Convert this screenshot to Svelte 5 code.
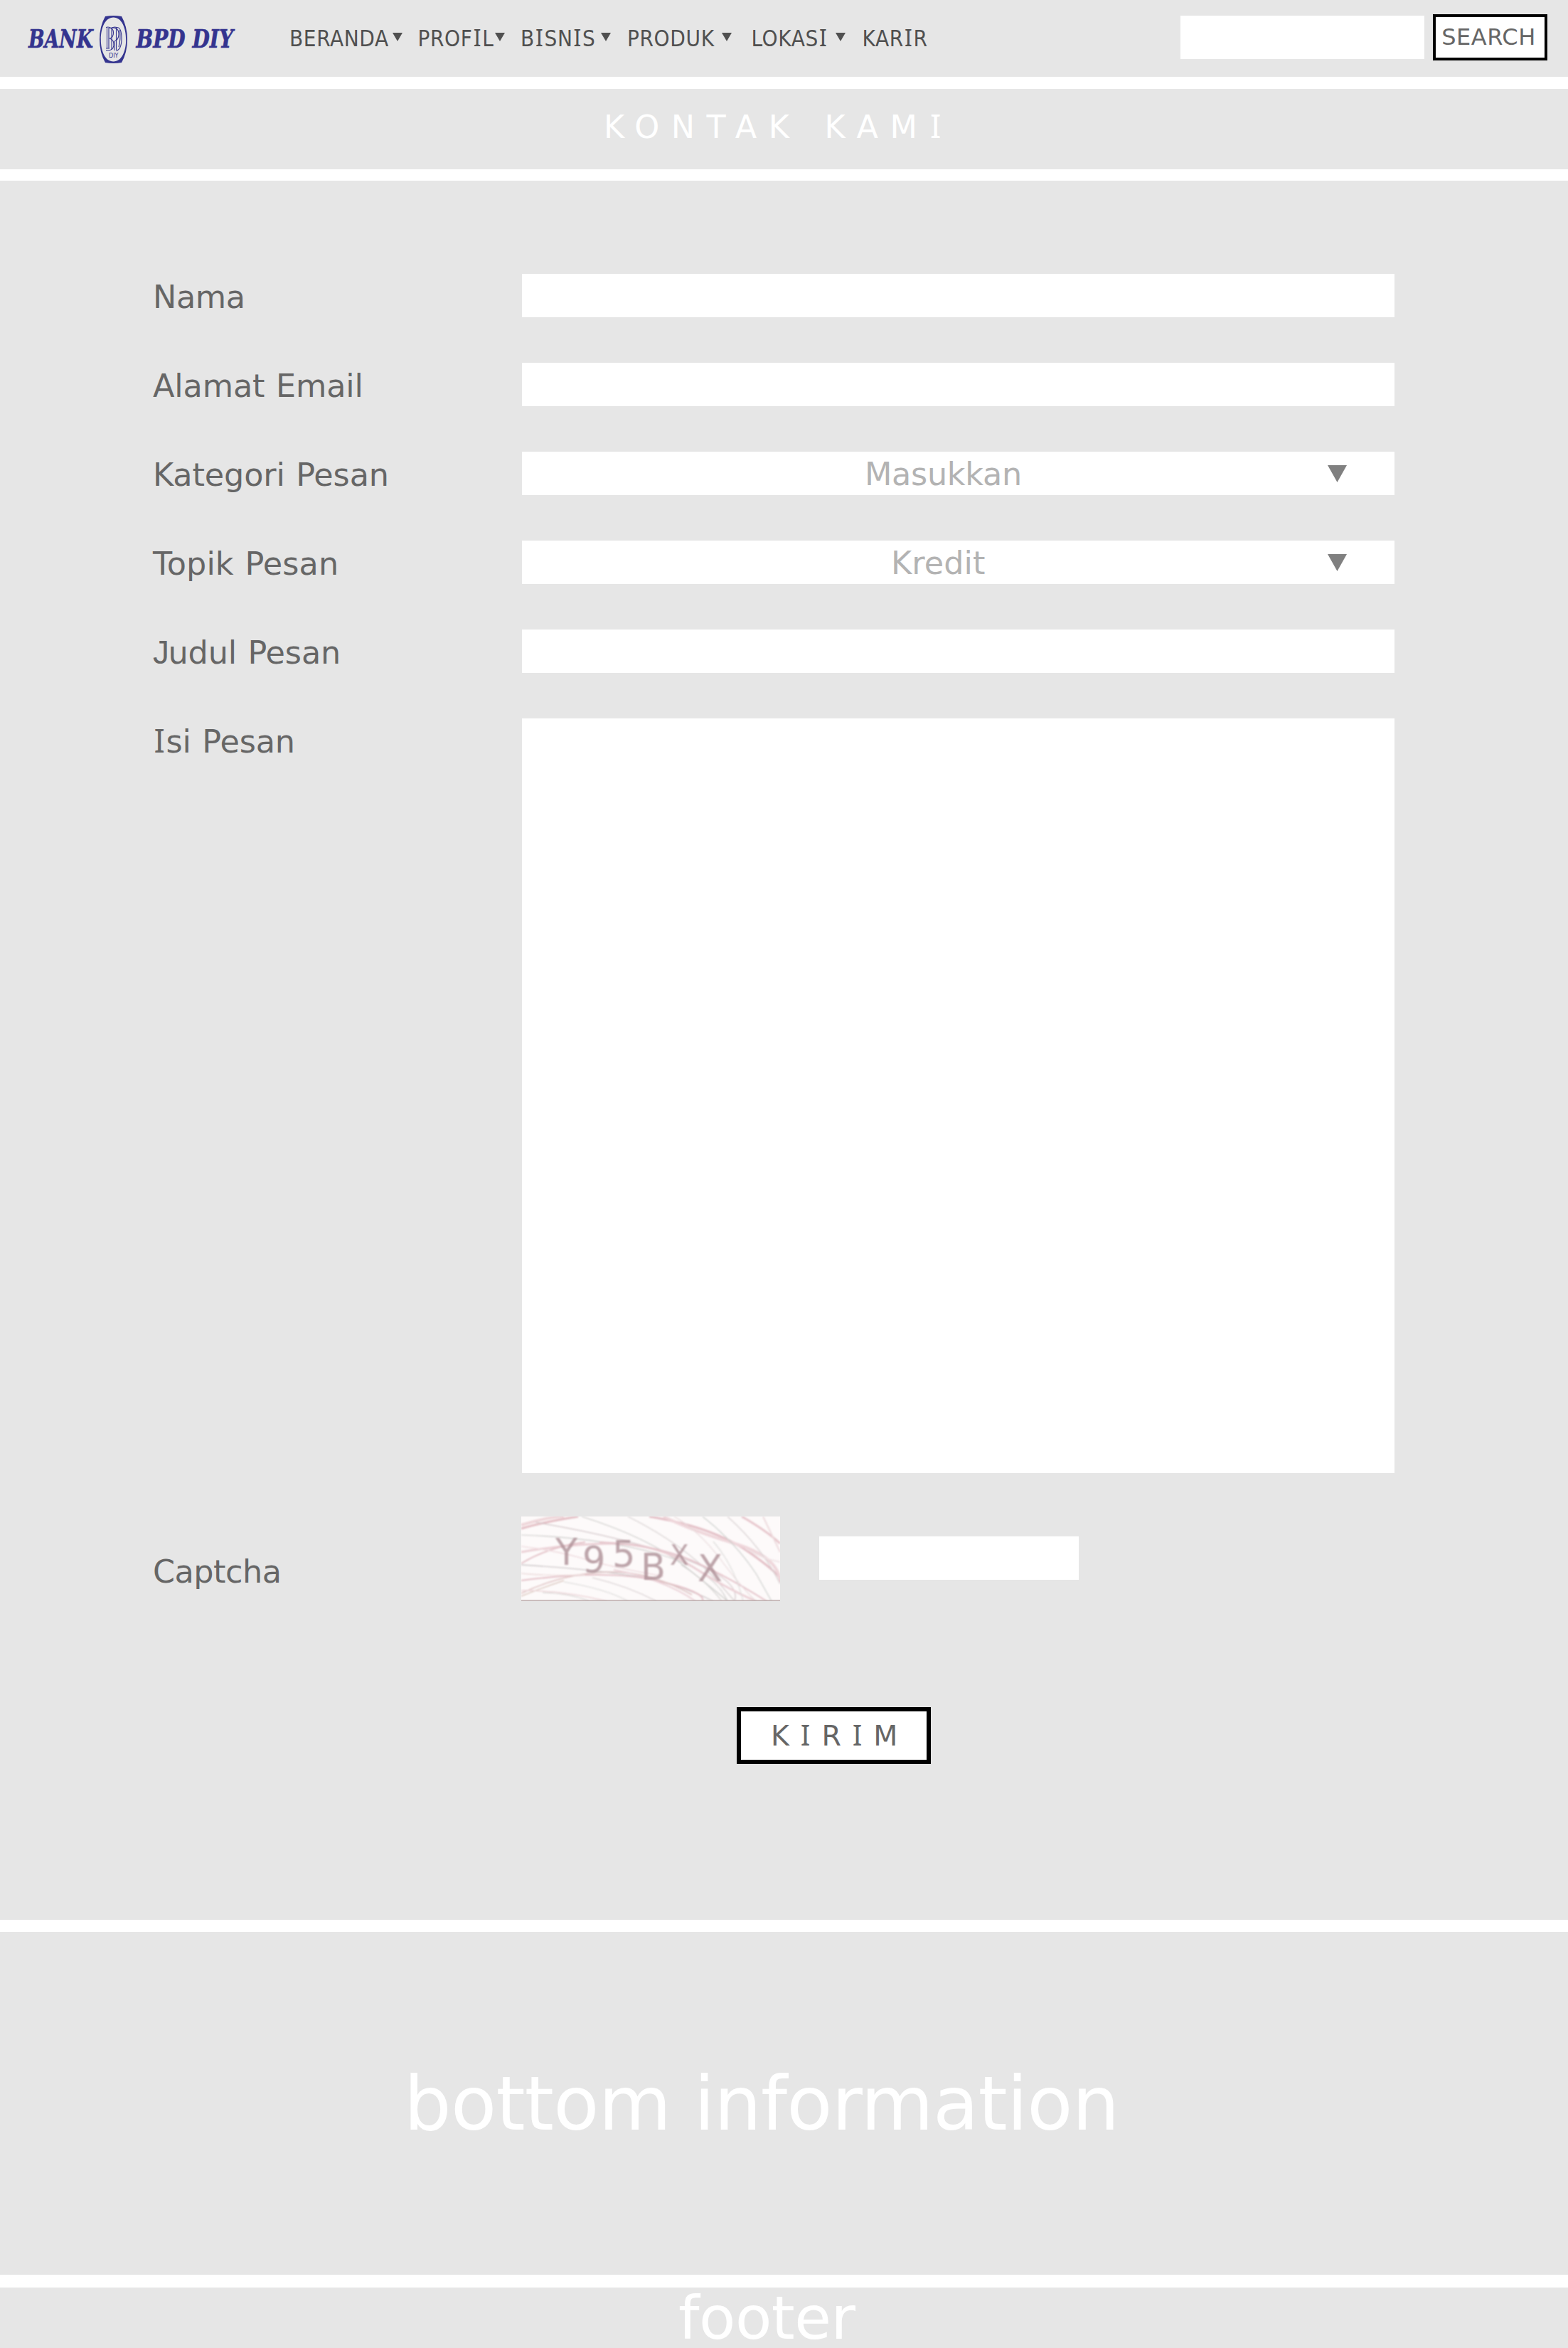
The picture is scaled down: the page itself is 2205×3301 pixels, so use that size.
<script>
  const menu = [
    { name: 'BERANDA', key: 'beranda', arrow: true },
    { name: 'PROFIL', key: 'profil', arrow: true },
    { name: 'BISNIS', key: 'bisnis', arrow: true },
    { name: 'PRODUK', key: 'produk', arrow: true },
    { name: 'LOKASI', key: 'lokasi', arrow: true },
    { name: 'KARIR', key: 'karir', arrow: false }
  ];

  const fields = [
    { label: 'Nama', key: 'nama' },
    { label: 'Alamat Email', key: 'email' },
    { label: 'Kategori Pesan', key: 'kategori', value: 'Masukkan' },
    { label: 'Topik Pesan', key: 'topik', value: 'Kredit' },
    { label: 'Judul Pesan', key: 'judul' },
    { label: 'Isi Pesan', key: 'isi', tall: true }
  ];

  // Security-image strokes: [path, colour, width]
  const strokes = [
    ['M0 17 Q30 8 80 0', '#dfb4bb', 3], ['M0 12 Q40 0 60 0', '#ecd0d4', 4],
    ['M20 8 Q150 30 230 60 T300 119', '#c9bcbf', 1.2], ['M0 26 Q110 30 190 52 T290 119', '#c4c4c2', 1.2],
    ['M85 0 Q180 30 230 70 T290 119', '#c1c2bf', 1.3], ['M150 0 Q230 40 275 90 L300 119', '#cfc9c9', 1.3],
    ['M180 0 Q270 15 320 50 T364 92', '#dfb5bd', 3], ['M200 0 Q240 20 300 38 T364 90', '#ecd0d5', 4],
    ['M255 0 Q300 35 330 80 L352 119', '#c5c9c6', 1.3], ['M290 0 Q340 45 364 95', '#d2cbcc', 1.3],
    ['M310 0 Q345 20 364 38', '#e3bdc4', 3], ['M340 0 L364 50', '#ead5d8', 2],
    ['M0 50 Q70 38 130 38 T240 70 T330 119', '#e8c9cf', 3], ['M0 66 Q40 42 90 36', '#dfb8bf', 2],
    ['M110 36 Q190 40 240 62 T345 119', '#e0b9c1', 2], ['M0 68 Q100 74 160 84 T270 119', '#c5bfc1', 1.3],
    ['M0 90 Q120 74 190 90 T255 119', '#dfb7bf', 2.2], ['M0 108 Q60 80 120 78 T240 110', '#d8b7b7', 1.5],
    ['M0 112 Q30 100 60 90', '#d6c1b7', 1.4], ['M60 92 Q120 102 150 119', '#d0d0cf', 1.2],
    ['M100 86 Q150 98 190 119', '#cdc3c5', 1.2], ['M30 107 Q70 108 95 119', '#c5c4c1', 1.2],
    ['M0 104 Q60 104 120 119', '#ead0d4', 1.5], ['M130 75 Q200 88 245 119', '#e8cbd2', 2],
    ['M215 0 Q250 20 280 60 T330 119', '#e4d4d6', 1.2], ['M225 68 Q260 90 282 119', '#c9c8c6', 1.2],
    ['M270 35 Q300 70 312 119', '#d6d6d4', 1.2], ['M0 80 Q40 84 90 82', '#ead8d8', 1.3],
    ['M0 42 Q50 48 90 60 T200 84', '#eed9dd', 1.5], ['M315 45 Q340 60 364 64', '#eee0e2', 2]
  ];
</script>

<!-- Capital I carries slab serifs and J rests on the baseline, so each is set in its own face -->
{#snippet lettered(text)}{#each text.split(/([IJ])/) as part}{#if part === 'I'}<span class="cap-i">I</span>{:else if part === 'J'}<span class="cap-j">J</span>{:else}{part}{/if}{/each}{/snippet}

<div class="page">
  <header class="topbar">
    <svg class="logo" width="300" height="72" viewBox="0 0 300 72" role="img" aria-label="Bank BPD DIY">
      <g class="logo-name">
        <text x="5" y="46.500" textLength="91" lengthAdjust="spacingAndGlyphs">BANK</text>
        <text x="156.500" y="46.500" textLength="136.500" lengthAdjust="spacingAndGlyphs">BPD DIY</text>
      </g>
      <path fill="#34348f" fill-rule="evenodd" d="M113 3Q124.500 1 136 3Q144 17 144 35.500Q144 54 136 68Q124.500 70 113 68Q105 54 105 35.500Q105 17 113 3ZM124.500 4.500C113 4.500 106.800 19 106.800 35.500C106.800 52 113 66.500 124.500 66.500C136 66.500 142.200 52 142.200 35.500C142.200 19 136 4.500 124.500 4.500Z" />
      <g fill="none" stroke="#34348f" stroke-width="1.100">
        <path d="M114 18.500Q118 17 121 19.500Q126 17 129 18.500Q136 18 136 34Q136 50 128 51.500" />
        <path d="M115.500 19V48M118 19V48M122 19V50M126 38V51M128.500 19V50M133.500 22Q135 35 132 46" />
        <path d="M118 19Q124.500 19 124.500 26Q124.500 33 119 34Q126 36 125 44Q124 52 114 50.500" />
        <path d="M122 19Q132 18 132 28Q132 36 126 38M114 48H119" />
      </g>
      <text class="logo-mark" x="118" y="60.500" textLength="13.500" lengthAdjust="spacingAndGlyphs">DIY</text>
    </svg>

    <nav class="menu">
      {#each menu as item}
        <a class="menu-item {item.key}" href="#{item.key}">
          <span class="menu-text">{@render lettered(item.name)}</span>
          {#if item.arrow}
            <svg class="caret" width="14" height="12" viewBox="0 0 14 12"><path d="M0 0H14L7 12Z" /></svg>
          {/if}
        </a>
      {/each}
    </nav>

    <input class="search-box" aria-label="Search" />
    <button class="search-button">SEARCH</button>
  </header>

  <section class="title-bar">
    <h1>{@render lettered('KONTAK KAMI')}</h1>
  </section>

  <main class="contact">
    {#each fields as field}
      <div class="row">
        <span class="label {field.key}">{@render lettered(field.label)}</span>
        {#if field.value}
          <div class="control select {field.key}">
            <span class="value">{field.value}</span>
            <svg class="arrow" width="27" height="24" viewBox="0 0 27 24"><path d="M0 0H27L13.500 24Z" /></svg>
          </div>
        {:else if field.tall}
          <div class="control tall"></div>
        {:else}
          <div class="control"></div>
        {/if}
      </div>
    {/each}

    <div class="captcha-row">
      <span class="label captcha-label">Captcha</span>
      <svg class="captcha" width="364" height="119" viewBox="0 0 364 119">
        <rect width="364" height="119" fill="#fdfafa" />
        <g class="soft" fill="none">
          {#each strokes as [d, colour, width]}
            <path {d} stroke={colour} stroke-width={width} />
          {/each}
        </g>
        <g class="code">
          <text x="48" y="68">Y</text>
          <text x="86" y="79">9</text>
          <text x="128" y="71">5</text>
          <text x="168" y="89">B</text>
          <text class="small" x="209" y="68">X</text>
          <text x="248" y="91">X</text>
        </g>
        <path d="M0 118H364" stroke="#b9a9a8" stroke-width="1.500" />
      </svg>
      <div class="captcha-input"></div>
    </div>

    <button class="send">{@render lettered('KIRIM')}</button>
  </main>

  <section class="bottom-info"><span>bottom information</span></section>
  <footer><span>footer</span></footer>
</div>

<style>
  :global(body) {
    margin: 0;
    background: #fff;
  }

  .page {
    width: 2205px;
    height: 3301px;
    display: flex;
    flex-direction: column;
    font-family: 'DejaVu Sans', Verdana, sans-serif;
    color: #666;
  }

  .page :is(header, nav, section, main, footer, button, input, div) {
    box-sizing: border-box;
  }

  .cap-i {
    font-family: 'Noto Sans', sans-serif;
    font-size: 1.02em;
    line-height: 0;
    margin: 0 0.035em;
  }

  .cap-j {
    font-family: 'Liberation Sans', Arial, sans-serif;
    font-size: 1.03em;
    line-height: 0;
    margin-right: -0.03em;
  }

  .topbar {
    display: flex;
    align-items: flex-start;
    height: 107.500px;
    flex: none;
    background: #e6e6e6;
  }

  .logo {
    flex: none;
    margin: 20px 0 0 35px;
    overflow: visible;
  }

  .logo-name {
    font: italic bold 35px 'DejaVu Serif Condensed', 'DejaVu Serif', serif;
    fill: #34348f;
    stroke: #34348f;
    stroke-width: 0.6px;
  }

  .logo-mark {
    font: 8px 'DejaVu Sans', sans-serif;
    fill: #34348f;
  }

  .menu {
    display: flex;
    flex: none;
    width: 1325px;
    padding: 35px 0 0 72px;
    font-family: 'DejaVu Sans Condensed', 'DejaVu Sans', sans-serif;
    font-stretch: condensed;
    font-size: 31.200px;
    line-height: 38px;
    letter-spacing: 0.600px;
  }

  .menu-item {
    display: flex;
    justify-content: space-between;
    flex: none;
    color: #505050;
    text-decoration: none;
    white-space: nowrap;
  }

  .caret {
    flex: none;
    margin-top: 11px;
    fill: #505050;
  }

  .beranda { width: 159px; margin-right: 21.500px; }
  .profil { width: 122px; margin-right: 22.500px; }
  .bisnis { width: 126.500px; margin-right: 23.500px; }
  .produk { width: 146.500px; margin-right: 28px; }
  .lokasi { width: 132px; margin-right: 24px; }

  .search-box {
    flex: none;
    width: 343px;
    height: 61px;
    margin: 22px 12px 0 0;
    padding: 0;
    border: 0;
    background: #fff;
  }

  .search-button {
    flex: none;
    width: 161px;
    height: 65px;
    margin: 20px 29px 0 0;
    padding: 0 4px 0 0;
    border: 4px solid #000;
    background: #fff;
    color: #666;
    font: 32px/57px 'DejaVu Sans', sans-serif;
    letter-spacing: 0.500px;
    white-space: nowrap;
  }

  .title-bar {
    flex: none;
    height: 113px;
    margin-top: 17.500px;
    padding: 26px 0 0 849px;
    background: #e6e6e6;
  }

  h1 {
    margin: 0;
    color: #fff;
    font-size: 44.500px;
    font-weight: 400;
    line-height: 56px;
    letter-spacing: 16.500px;
    word-spacing: 2.500px;
    white-space: nowrap;
  }

  .contact {
    flex: none;
    height: 2445px;
    margin-top: 16px;
    padding: 131px 244px 0 215px;
    background: #e6e6e6;
  }

  .row {
    display: flex;
    justify-content: space-between;
    margin-bottom: 64px;
  }

  .label {
    height: 56px;
    padding-top: 4px;
    font-size: 44.500px;
    line-height: 57px;
    letter-spacing: -0.120px;
    word-spacing: 1.500px;
    white-space: nowrap;
  }

  .nama.label {
    letter-spacing: -0.400px;
  }

  .topik.label {
    letter-spacing: 0.100px;
  }

  .control {
    width: 1227px;
    height: 61px;
    background: #fff;
  }

  .tall {
    height: 1061px;
  }

  .select {
    display: flex;
    justify-content: space-between;
    padding: 0 67px 0 482px;
    color: #b3b3b3;
    font-size: 44.500px;
    line-height: 64px;
    letter-spacing: -0.300px;
  }

  .topik.select {
    padding-left: 519px;
    letter-spacing: 0.100px;
  }

  .arrow {
    margin-top: 19px;
    fill: #808080;
  }

  .captcha-row {
    display: flex;
    margin-top: -3px;
  }

  .captcha-label {
    width: 518px;
    padding-top: 49px;
    letter-spacing: -0.500px;
  }

  .soft {
    opacity: 0.85;
    filter: blur(0.8px);
  }

  .code {
    font-size: 51px;
    fill: #ad8f96;
    opacity: 0.8;
    filter: blur(0.8px);
  }

  .small {
    font-size: 39px;
  }

  .captcha-input {
    width: 365px;
    height: 61px;
    margin: 28px 0 0 55px;
    background: #fff;
  }

  .send {
    display: block;
    width: 273px;
    height: 80px;
    margin: 149px 0 0 821px;
    padding: 0 0 0 42px;
    border: 6px solid #000;
    background: #fff;
    color: #666;
    font: 39.500px/68px 'DejaVu Sans', sans-serif;
    letter-spacing: 14.500px;
    text-align: left;
    white-space: nowrap;
  }

  .bottom-info {
    flex: none;
    height: 482px;
    margin-top: 17px;
    padding: 176px 0 0 568px;
    background: #e6e6e6;
    color: #fff;
    font-size: 105px;
    line-height: 132px;
    letter-spacing: -0.750px;
    white-space: nowrap;
  }

  footer {
    flex: none;
    height: 85px;
    margin-top: 18px;
    padding-left: 954px;
    background: #e6e6e6;
    color: #fff;
    font-size: 84px;
    line-height: 86px;
    letter-spacing: -0.500px;
  }
</style>
